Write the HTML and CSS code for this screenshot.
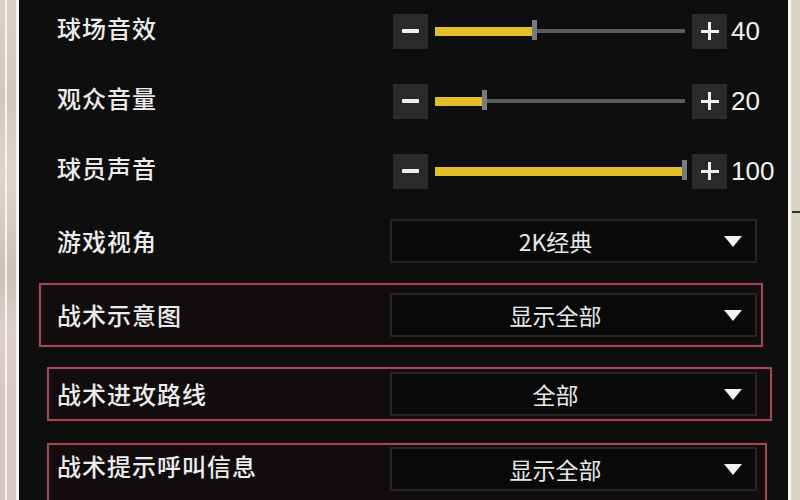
FILE: index.html
```html
<!DOCTYPE html>
<html lang="zh-CN">
<head>
<meta charset="utf-8">
<title>设置</title>
<link rel="stylesheet" href="styles.css">
</head>
<body>
<div class="page">
  <div class="edge-left"><span class="edge-line l1"></span><span class="edge-line l2"></span></div>
  <main class="panel">
    <div class="list">
      <div class="row slider-row">
        <div class="label up">球场音效</div>
        <div class="slider">
          <div class="btn"><span class="minus"></span></div>
          <div class="track"><div class="fill" style="width:40%"></div><div class="thumb" style="left:40%"></div></div>
          <div class="btn"><span class="plus"></span></div>
          <div class="value">40</div>
        </div>
      </div>
      <div class="row slider-row">
        <div class="label up">观众音量</div>
        <div class="slider">
          <div class="btn"><span class="minus"></span></div>
          <div class="track"><div class="fill" style="width:20%"></div><div class="thumb" style="left:20%"></div></div>
          <div class="btn"><span class="plus"></span></div>
          <div class="value">20</div>
        </div>
      </div>
      <div class="row slider-row">
        <div class="label up">球员声音</div>
        <div class="slider">
          <div class="btn"><span class="minus"></span></div>
          <div class="track"><div class="fill" style="width:100%"></div><div class="thumb" style="left:100%"></div></div>
          <div class="btn"><span class="plus"></span></div>
          <div class="value">100</div>
        </div>
      </div>
      <div class="row select-row">
        <div class="label">游戏视角</div>
        <div class="select"><span class="sel-text">2K经典</span><svg class="arrow" width="18" height="11" viewBox="0 0 18 11"><path d="M0 0 H18 L9 11 Z" fill="#f2f2f2"/></svg></div>
      </div>
      <div class="row select-row marked m1">
        <div class="label">战术示意图</div>
        <div class="select"><span class="sel-text">显示全部</span><svg class="arrow" width="18" height="11" viewBox="0 0 18 11"><path d="M0 0 H18 L9 11 Z" fill="#f2f2f2"/></svg></div>
      </div>
      <div class="row select-row marked m2">
        <div class="label">战术进攻路线</div>
        <div class="select"><span class="sel-text">全部</span><svg class="arrow" width="18" height="11" viewBox="0 0 18 11"><path d="M0 0 H18 L9 11 Z" fill="#f2f2f2"/></svg></div>
      </div>
      <div class="row select-row marked m3">
        <div class="label low">战术提示呼叫信息</div>
        <div class="select"><span class="sel-text">显示全部</span><svg class="arrow" width="18" height="11" viewBox="0 0 18 11"><path d="M0 0 H18 L9 11 Z" fill="#f2f2f2"/></svg></div>
      </div>
    </div>
  </main>
  <div class="edge-right"><span class="edge-line r1"></span><span class="tick"></span></div>
</div>
</body>
</html>
```
FILE: styles.css
```css
html, body {
  margin: 0;
  padding: 0;
  width: 800px;
  height: 500px;
  overflow: hidden;
  background: #0f0e0e;
}
.page {
  display: flex;
  width: 800px;
  height: 500px;
  font-family: "Noto Sans CJK SC", "Noto Sans", sans-serif;
  color: #e6e6e6;
}
.edge-left {
  width: 19px;
  flex: none;
  position: relative;
  background: linear-gradient(180deg, #d9d2c4 0%, #cfc8bb 20%, #ddd6ca 35%, #c8c2b6 55%, #dcd0c8 66%, #d8c6c2 80%, #d6c9c4 100%);
}
.edge-line {
  position: absolute;
  top: 0;
  bottom: 0;
  width: 2px;
  background: #f6f3ee;
}
.l1 { left: 5px; }
.l2 { left: 16px; width: 3px; }
.edge-right {
  width: 12px;
  flex: none;
  position: relative;
  background: #d9d3c8;
}
.r1 { left: 0; width: 3px; }
.tick {
  position: absolute;
  left: 4px;
  top: 211px;
  width: 8px;
  height: 2px;
  background: #333;
}
.panel {
  flex: 1;
  background: #0f0e0e;
  overflow: hidden;
}
.list {
  margin-top: -4px;
  display: flex;
  flex-direction: column;
}
.row {
  display: flex;
  align-items: center;
  padding-left: 38px;
}
.slider-row, .select-row {
  height: 70px;
}
.label {
  width: 333px;
  flex: none;
  font-size: 24px;
  font-weight: 500;
  letter-spacing: 1px;
  line-height: 1;
  color: #ececec;
  white-space: nowrap;
}
.label.up {
  padding-bottom: 7px;
}
.label.low {
  margin-top: 7px;
}
.slider {
  display: flex;
  align-items: center;
  margin-left: 3px;
}
.btn {
  width: 35px;
  height: 35px;
  flex: none;
  background: #2a2a2a;
  display: flex;
  align-items: center;
  justify-content: center;
  position: relative;
}
.minus {
  width: 17px;
  height: 4px;
  background: #f0f0f0;
  border-radius: 1px;
}
.plus {
  width: 18px;
  height: 18px;
  position: relative;
}
.plus::before, .plus::after {
  content: "";
  position: absolute;
  background: #f2f2f2;
}
.plus::before {
  left: 0;
  top: 8px;
  width: 18px;
  height: 2.5px;
}
.plus::after {
  top: 0;
  left: 7.75px;
  width: 2.5px;
  height: 18px;
}
.track {
  width: 250px;
  height: 4px;
  margin: 0 7px;
  background: #5c5c5c;
  position: relative;
}
.fill {
  position: absolute;
  left: 0;
  top: -2px;
  height: 9px;
  background: #e2bf26;
}
.thumb {
  position: absolute;
  top: -9px;
  width: 5px;
  height: 20px;
  margin-left: -3px;
  background: #7a7a7e;
}
.value {
  margin-left: 4px;
  font-family: "Liberation Sans", sans-serif;
  font-size: 26px;
  color: #f0f0f0;
}
.select {
  width: 363px;
  height: 40px;
  flex: none;
  border: 2px solid #262526;
  background: #0a090a;
  display: flex;
  align-items: center;
  box-sizing: content-box;
}
.sel-text {
  flex: 1;
  text-align: center;
  font-size: 23px;
  font-weight: 400;
  color: #e8e8e8;
  margin-right: 5px;
}
.arrow {
  flex: none;
  margin-right: 13px;
}
.marked {
  border: 2px solid #9a4a52;
  box-shadow: 0 0 2px #4a1018, inset 0 0 2px #4a1018;
  background: #120c0f;
}
.m1 {
  height: 60px;
  margin: 7px 25px 0 20px;
  padding-left: 16px;
}
.m2 {
  height: 50px;
  margin: 20px 16px 0 28px;
  padding-left: 8px;
}
.m3 {
  height: 60px;
  margin: 22px 21px 0 28px;
  padding-left: 8px;
  align-items: flex-start;
  padding-top: 2px;
}
```
